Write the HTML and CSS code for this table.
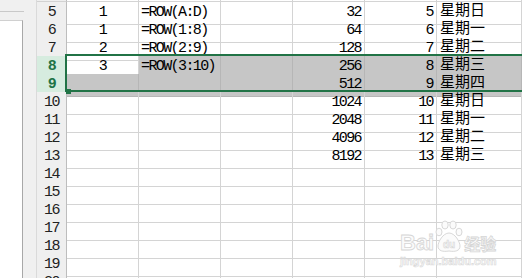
FILE: index.html
```html
<!DOCTYPE html>
<html>
<head>
<meta charset="utf-8">
<link rel="stylesheet" href="styles.css">
</head>
<body>
<div class="app">
  <div class="side">
    <div class="side-top"></div>
    <div class="side-box"></div>
  </div>
  <div class="sheet">
    <div class="row stub"><div class="c h"></div><div class="c"></div><div class="c"></div><div class="c"></div><div class="c"></div><div class="c"></div><div class="c"></div></div>
    <div class="row"><div class="c h">5</div><div class="c ctr">1</div><div class="c">=ROW(A:D)</div><div class="c"></div><div class="c r">32</div><div class="c r">5</div><div class="c cjk">星期日</div></div>
    <div class="row"><div class="c h">6</div><div class="c ctr">1</div><div class="c">=ROW(1:8)</div><div class="c"></div><div class="c r">64</div><div class="c r">6</div><div class="c cjk">星期一</div></div>
    <div class="row"><div class="c h">7</div><div class="c ctr">2</div><div class="c">=ROW(2:9)</div><div class="c"></div><div class="c r">128</div><div class="c r">7</div><div class="c cjk">星期二</div></div>
    <div class="row"><div class="c h hs">8</div><div class="c ctr">3</div><div class="c s">=ROW(3:10)</div><div class="c s"></div><div class="c r s">256</div><div class="c r s">8</div><div class="c cjk s">星期三</div></div>
    <div class="row"><div class="c h hs">9</div><div class="c s"></div><div class="c s"></div><div class="c s"></div><div class="c r s">512</div><div class="c r s">9</div><div class="c cjk s">星期四</div></div>
    <div class="row"><div class="c h">10</div><div class="c"></div><div class="c"></div><div class="c"></div><div class="c r">1024</div><div class="c r">10</div><div class="c cjk">星期日</div></div>
    <div class="row"><div class="c h">11</div><div class="c"></div><div class="c"></div><div class="c"></div><div class="c r">2048</div><div class="c r">11</div><div class="c cjk">星期一</div></div>
    <div class="row"><div class="c h">12</div><div class="c"></div><div class="c"></div><div class="c"></div><div class="c r">4096</div><div class="c r">12</div><div class="c cjk">星期二</div></div>
    <div class="row"><div class="c h">13</div><div class="c"></div><div class="c"></div><div class="c"></div><div class="c r">8192</div><div class="c r">13</div><div class="c cjk">星期三</div></div>
    <div class="row"><div class="c h">14</div><div class="c"></div><div class="c"></div><div class="c"></div><div class="c"></div><div class="c"></div><div class="c"></div></div>
    <div class="row"><div class="c h">15</div><div class="c"></div><div class="c"></div><div class="c"></div><div class="c"></div><div class="c"></div><div class="c"></div></div>
    <div class="row"><div class="c h">16</div><div class="c"></div><div class="c"></div><div class="c"></div><div class="c"></div><div class="c"></div><div class="c"></div></div>
    <div class="row"><div class="c h">17</div><div class="c"></div><div class="c"></div><div class="c"></div><div class="c"></div><div class="c"></div><div class="c"></div></div>
    <div class="row"><div class="c h">18</div><div class="c"></div><div class="c"></div><div class="c"></div><div class="c"></div><div class="c"></div><div class="c"></div></div>
    <div class="row"><div class="c h">19</div><div class="c"></div><div class="c"></div><div class="c"></div><div class="c"></div><div class="c"></div><div class="c"></div></div>
    <div class="row"><div class="c h">20</div><div class="c"></div><div class="c"></div><div class="c"></div><div class="c"></div><div class="c"></div><div class="c"></div></div>

    <div class="sel"><span class="handle"></span></div>

    <div class="wm">
      <div class="wm-top">
        <span class="wm-bai">Bai</span>
        <svg class="wm-paw" width="28" height="33" viewBox="0 0 28 33">
          <g fill="#fbfbfb" stroke="#d8d8d8" stroke-width="1">
            <ellipse cx="10" cy="5" rx="3.2" ry="4"/>
            <ellipse cx="18" cy="5" rx="3.2" ry="4"/>
            <ellipse cx="4" cy="12" rx="3" ry="3.8"/>
            <ellipse cx="24" cy="12" rx="3" ry="3.8"/>
            <path d="M14 13 C8 13 3 22 3 26 C3 31 8 32 14 31 C20 32 25 31 25 26 C25 22 20 13 14 13 Z"/>
          </g>
          <text x="14" y="28" text-anchor="middle" class="wm-du">du</text>
        </svg>
        <span class="wm-jy">经验</span>
      </div>
      <div class="wm-url">jingyan.baidu.com</div>
    </div>
  </div>
</div>
</body>
</html>
```
FILE: styles.css
```css
html, body {
  margin: 0;
  padding: 0;
  background: #ffffff;
}
.app {
  display: flex;
  width: 522px;
  height: 278px;
  overflow: hidden;
}
.side {
  width: 37px;
  flex: none;
  box-sizing: border-box;
  background: #f0f0f0;
  border-right: 1px solid #dadada;
  display: flex;
  flex-direction: column;
}
.side-top {
  width: 24px;
  height: 11px;
  border-bottom: 1px solid #c9c9c9;
}
.side-box {
  margin-top: 8px;
  width: 22px;
  flex: 1;
  background: #ffffff;
  border-top: 1px solid #d0d0d0;
  border-right: 1px solid #a8a8a8;
}
.sheet {
  flex: 1;
  position: relative;
  overflow: hidden;
}
.row {
  display: grid;
  grid-template-columns: 30px 72px 82px 72px 72px 72px 1fr;
  height: 18px;
}
.row.stub {
  height: 2px;
}
.c {
  box-sizing: border-box;
  border-right: 1px solid #d4d4d4;
  border-bottom: 1px solid #d4d4d4;
  font-family: "Liberation Mono", monospace;
  font-size: 15px;
  letter-spacing: -1.6px;
  line-height: 22px;
  height: 100%;
  white-space: nowrap;
  padding: 0 2px;
  color: #000000;
  overflow: visible;
}
.stub .c {
  line-height: 0;
}
.c.h {
  background: #efefef;
  border-right: 1px solid #bdbdbd;
  border-bottom: 1px solid #d2d2d2;
  text-align: center;
  color: #222222;
  padding: 0;
}
.c.hs {
  background: #d6ecdf;
  color: #217346;
  font-weight: bold;
}
.c.ctr {
  text-align: center;
}
.c.r {
  text-align: right;
  padding-right: 3px;
}
.c.cjk {
  font-family: "Noto Sans CJK SC", sans-serif;
  font-size: 15px;
  letter-spacing: 0;
  line-height: 14px;
  padding-left: 3px;
}
.c.s {
  background: #c6c6c6;
  border-right-color: #b6b6b6;
  border-bottom-color: #b6b6b6;
}
.sel {
  position: absolute;
  left: 28px;
  top: 54px;
  right: -6px;
  height: 38px;
  box-sizing: border-box;
  border: 2px solid #217346;
}
.handle {
  position: absolute;
  left: -1px;
  bottom: -4px;
  width: 5px;
  height: 5px;
  background: #217346;
}
.wm {
  position: absolute;
  left: 363px;
  top: 219px;
  display: flex;
  flex-direction: column;
  align-items: flex-start;
}
.wm-top {
  display: flex;
  align-items: flex-end;
  height: 34px;
}
.wm-bai {
  font-family: "Liberation Sans", sans-serif;
  font-weight: bold;
  font-size: 22px;
  line-height: 20px;
  color: #fbfbfb;
  -webkit-text-stroke: 0.8px #d6d6d6;
}
.wm-paw {
  display: block;
  margin: 0 1px;
}
.wm-du {
  font-family: "Liberation Sans", sans-serif;
  font-weight: bold;
  font-size: 10px;
  fill: #fbfbfb;
  stroke: #d6d6d6;
  stroke-width: 0.6;
}
.wm-jy {
  font-family: "Noto Sans CJK SC", sans-serif;
  font-weight: bold;
  font-size: 16px;
  line-height: 20px;
  color: #fbfbfb;
  -webkit-text-stroke: 0.8px #d6d6d6;
}
.wm-url {
  font-family: "Liberation Sans", sans-serif;
  font-weight: bold;
  font-size: 11px;
  line-height: 12px;
  margin-top: 2px;
  color: #fbfbfb;
  -webkit-text-stroke: 0.6px #d9d9d9;
}
```
